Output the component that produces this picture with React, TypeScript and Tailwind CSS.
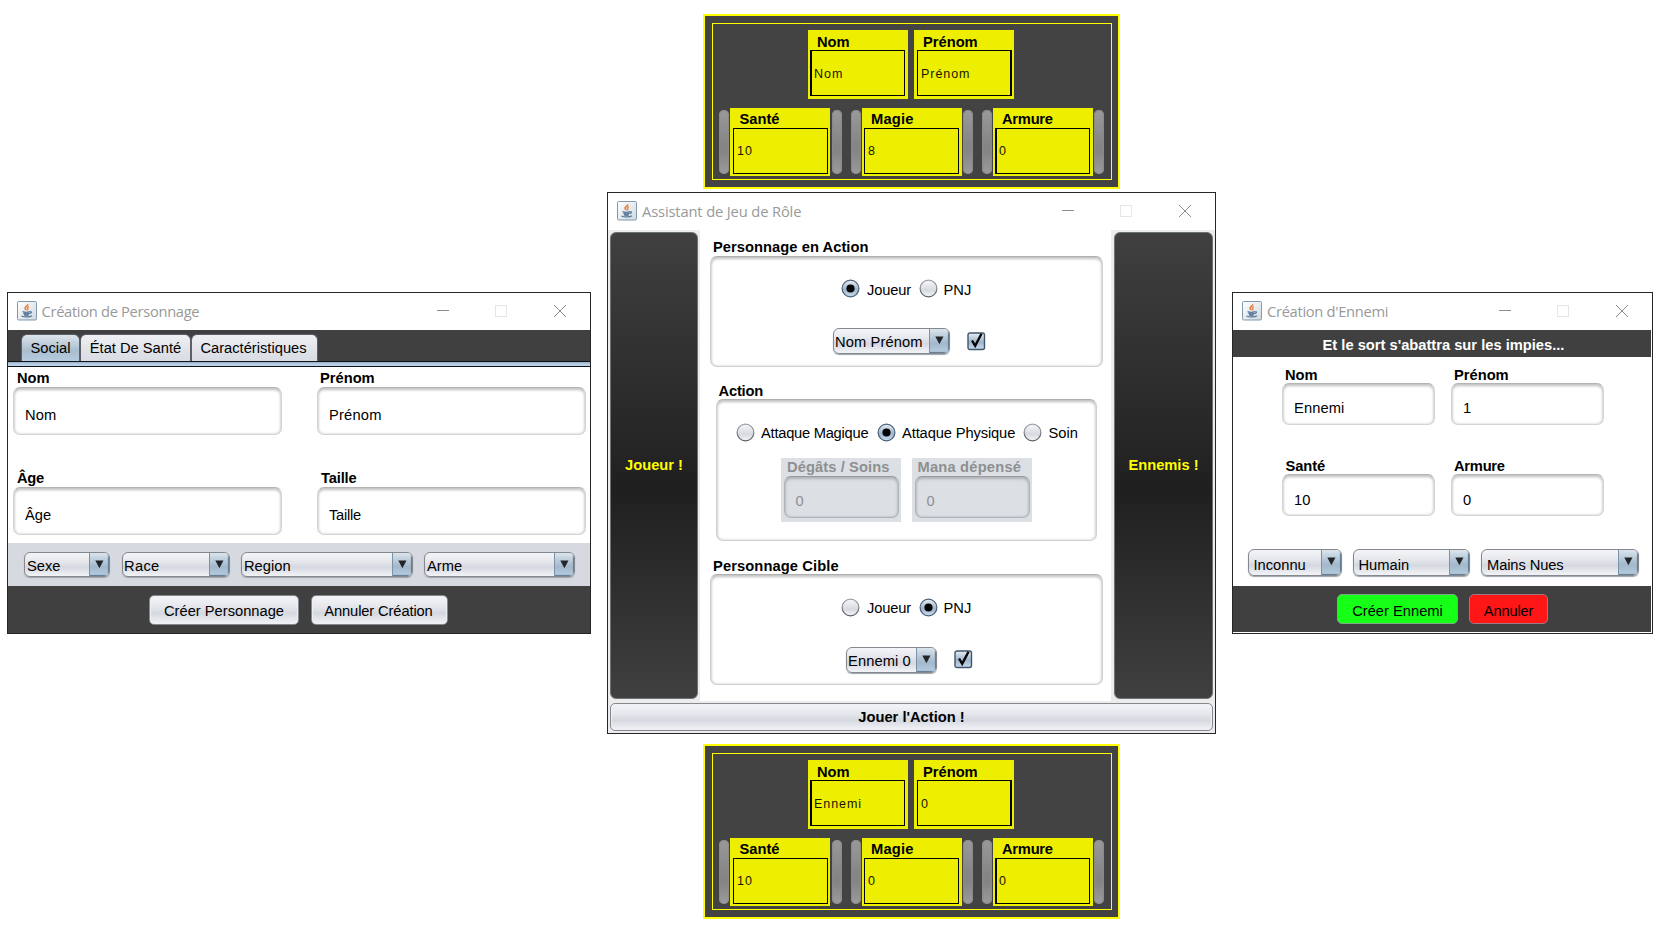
import React from "react";
import clsx from "clsx";

const SILVER = "bg-[linear-gradient(to_bottom,#f4f5f8_0%,#e4e6eb_40%,#d5d8e0_62%,#e9ebf0_88%,#f2f3f6_100%)]";
const BLUE = "bg-[linear-gradient(to_bottom,#dbe4ec_0%,#b4c6d6_40%,#a2b8cb_60%,#b6cce0_100%)]";
const DARK = "bg-[linear-gradient(to_bottom,#404040_0%,#262626_45%,#1f1f1f_55%,#404040_100%)]";

function JavaIcon() {
  return (
    <svg width="20" height="20" viewBox="0 0 20 20" fill="none">
      <defs>
        <linearGradient id="cup-bg" x1="0" y1="0" x2="1" y2="1">
          <stop offset="0" stopColor="#ffffff" />
          <stop offset="1" stopColor="#cfd8e0" />
        </linearGradient>
      </defs>
      <rect x="0.5" y="0.5" width="19" height="18.5" rx="1.2" fill="url(#cup-bg)" stroke="#8299ae" />
      <path d="M10.600 3.300c.6 1.500-2.600 2.400-2.600 4 0 .9 1.200 1.300 1.200 2" stroke="#e57f3c" strokeWidth="1.600" />
      <path d="M11.800 5.600c-1.500.7-1.800 1.500-.9 2.200.5.500 0 1-.6 1.400" stroke="#e57f3c" strokeWidth="1.200" />
      <path d="M5.600 10.700c1.800.7 5.400.7 7.400 0M6.400 12.400c1.700.6 4.300.6 6 0M13.200 10.500c1.700 0 1.600 1.700-.5 2.200M7 13.900c1.300.5 3.500.5 4.900 0M4.400 15c2.700 1.400 8.800 1.300 10.600-.2" stroke="#56779a" strokeWidth="1.250" />
    </svg>
  );
}

function TitleBar({ title, track }: { title: string; track: string }) {
  return (
    <div className="flex h-[37px] shrink-0 bg-white pl-[9px] pr-[24px]">
      <div className="pt-[8px]">
        <JavaIcon />
      </div>
      <div className={clsx("mt-[8px] whitespace-nowrap font-['Open_Sans',sans-serif] text-[14.7px] leading-5 text-[#999]", track)}>{title}</div>
      <svg className="ml-auto mt-[11px]" width="129" height="14" viewBox="0 0 129 14" fill="none" shapeRendering="crispEdges">
        <path d="M0 6.500h12" stroke="#8c8c8c" />
        <rect x="58.500" y="1.500" width="11" height="11" stroke="#e6e6e6" />
        <path d="M117 1l12 12M129 1l-12 12" stroke="#8c8c8c" shapeRendering="auto" />
      </svg>
    </div>
  );
}

type FieldProps = { label: string; value: string; size: string; labelClass: string; valueClass: string };

function Field({ label, value, size, labelClass, valueClass }: FieldProps) {
  return (
    <div>
      <div className={clsx("h-[17px] whitespace-nowrap font-bold leading-4", labelClass)}>{label}</div>
      <div
        className={clsx(
          "whitespace-nowrap rounded-[7px] border border-[#d4d4d4] border-t-[#b4b4b4] leading-4 shadow-[inset_0_2px_3px_#c2c2c2,inset_0_0_3px_#cfcfcf]",
          size,
          valueClass,
        )}
      >
        {value}
      </div>
    </div>
  );
}

function Combo({ text, size, cap, textClass }: { text: string; size: string; cap: string; textClass: string }) {
  return (
    <div className={clsx("flex shrink-0 overflow-hidden rounded-[6px] border border-[#85898f] shadow-[0_1px_1px_#9da2aa]", SILVER, size)}>
      <div className={clsx("flex-1 whitespace-nowrap leading-4", textClass)}>{text}</div>
      <div className={clsx("flex justify-center border-l border-[#7b93a8] shadow-[inset_-1px_-1px_1px_#5d7890]", BLUE, cap)}>
        <svg className="mt-[7px]" width="9" height="9" viewBox="0 0 9 9">
          <path d="M0.300 0.500h8.200L4.400 8.300z" fill="#22262a" />
        </svg>
      </div>
    </div>
  );
}

function Radio({ on }: { on?: boolean }) {
  return (
    <svg className="block shrink-0" width="19" height="19" viewBox="0 0 19 19">
      <defs>
        <linearGradient id="radio-off" x1="0" y1="0" x2="0" y2="1">
          <stop offset="0" stopColor="#f8f8fa" />
          <stop offset="0.600" stopColor="#d6d9df" />
          <stop offset="1" stopColor="#f4f5f8" />
        </linearGradient>
        <linearGradient id="radio-on" x1="0" y1="0" x2="0" y2="1">
          <stop offset="0" stopColor="#e8eef4" />
          <stop offset="0.550" stopColor="#9fb5c9" />
          <stop offset="1" stopColor="#c8dcf0" />
        </linearGradient>
        <linearGradient id="radio-edge" x1="0" y1="0" x2="0" y2="1">
          <stop offset="0" stopColor="#9ea2a8" />
          <stop offset="1" stopColor="#5d6166" />
        </linearGradient>
      </defs>
      <circle cx="9.500" cy="9.500" r="8.400" fill={on ? "url(#radio-on)" : "url(#radio-off)"} stroke={on ? "#4b6178" : "url(#radio-edge)"} strokeWidth="1.200" />
      {on && <circle cx="9.500" cy="9.500" r="4.100" fill="#050505" />}
    </svg>
  );
}

function Check() {
  return (
    <svg className="block shrink-0" width="19" height="19" viewBox="0 0 19 19">
      <rect x="1" y="1" width="16.500" height="16.500" rx="2" fill="url(#radio-on)" stroke="#3f566c" strokeWidth="1.400" />
      <path d="M5 8.500l3.200 5.300L14.500 1.800" fill="none" stroke="#050505" strokeWidth="2.400" />
    </svg>
  );
}

function RadioItem({ label, on, gap, track, drop = "mt-[3px]" }: { label: string; on?: boolean; gap: string; track?: string; drop?: string }) {
  return (
    <div className={clsx("flex shrink-0", gap)}>
      <Radio on={on} />
      <span className={clsx("whitespace-nowrap leading-4", drop, track)}>{label}</span>
    </div>
  );
}

function SilverButton({ text, size, textClass }: { text: string; size: string; textClass: string }) {
  return (
    <button className={clsx("whitespace-nowrap rounded-[5px] border border-[#85898f] leading-4 shadow-[inset_0_0_1px_1px_#eef0f4]", SILVER, size, textClass)}>
      {text}
    </button>
  );
}

function StatBox({ label, value, labelClass, boxClass, outer }: { label: string; value: string; labelClass: string; boxClass: string; outer: string }) {
  return (
    <div className={clsx("w-[100px] shrink-0 bg-[#eeee00]", outer)}>
      <div className={clsx("h-4 whitespace-nowrap font-bold leading-4", labelClass)}>{label}</div>
      <div className={clsx("h-[46px] w-[95px] border border-black text-[12.500px] leading-4 tracking-[0.950px] text-[#181800]", boxClass)}>{value}</div>
    </div>
  );
}

function Bar({ gap }: { gap?: string }) {
  return (
    <div
      className={clsx(
        "mt-[2px] h-[64px] w-[10px] shrink-0 rounded-[5px] bg-[linear-gradient(to_bottom,#9a9a9a_0%,#868686_50%,#848484_65%,#9c9c9c_100%)] shadow-[inset_0_0_1px_1px_#8a8a8a]",
        gap,
      )}
    />
  );
}

type Stats = { nom: string; prenom: string; sante: string; magie: string; armure: string };

function StatCard({ s, place }: { s: Stats; place: string }) {
  return (
    <section className={clsx("absolute h-[175px] w-[417px] border-2 border-[#ffff00] bg-[#434343] p-[7px]", place)}>
      <div className="h-[157px] w-[400px] border border-[#ffff00] pt-[6px]">
        <div className="flex gap-[6px] pl-[95px]">
          <StatBox outer="h-[69px] pt-[4px]" label="Nom" value={s.nom} labelClass="pl-[9px]" boxClass="ml-[2px] border-l-2 pl-[2px] pt-[15px]" />
          <StatBox outer="h-[69px] pt-[4px]" label="Prénom" value={s.prenom} labelClass="pl-[9px]" boxClass="ml-[3px] border-r-2 pl-[3px] pt-[15px]" />
        </div>
        <div className="mt-[9px] flex pl-[6px]">
          <Bar />
          <StatBox outer="ml-px h-[68px] pt-[4px]" label="Santé" value={s.sante} labelClass="-mt-px mb-px pl-[9.500px]" boxClass="ml-[3px] pl-[3px] pt-[14px]" />
          <Bar gap="ml-[2px]" />
          <Bar gap="ml-[9px]" />
          <StatBox outer="ml-px h-[68px] pt-[4px]" label="Magie" value={s.magie} labelClass="-mt-px mb-px pl-[9px] tracking-[0.200px]" boxClass="ml-[2px] pl-[3px] pt-[14px]" />
          <Bar gap="ml-px" />
          <Bar gap="ml-[9px]" />
          <StatBox outer="ml-px h-[68px] pt-[4px]" label="Armure" value={s.armure} labelClass="-mt-px mb-px pl-[9px] tracking-[-0.250px]" boxClass="ml-[2px] border-l-2 pl-[2px] pt-[14px]" />
          <Bar gap="ml-px" />
        </div>
      </div>
    </section>
  );
}

function CharacterWindow() {
  const big = "h-[48px] w-[269px] pl-[11px] pt-[19px]";
  const tab = "h-[27px] shrink-0 rounded-t-[6px] border border-b-0 border-[#5b6068] pt-[5px] text-center leading-4 whitespace-nowrap";
  return (
    <section className="absolute left-[7px] top-[292px] flex h-[342px] w-[584px] flex-col border border-[#262626] bg-white">
      <TitleBar title="Création de Personnage" track="ml-[4.500px] tracking-[-0.310px]" />
      <div className="flex h-[31px] items-end bg-[#404040] pl-[13px]">
        <div className={clsx(tab, "w-[59px] bg-[linear-gradient(to_bottom,#dde5ec_0%,#a9bdce_60%,#b5cbdf_100%)]")}>Social</div>
        <div className={clsx(tab, "w-[111px] bg-[linear-gradient(to_bottom,#eff0f3_0%,#e0e2e8_60%,#d9dce3_100%)]")}>État De Santé</div>
        <div className={clsx(tab, "w-[127px] bg-[linear-gradient(to_bottom,#eff0f3_0%,#e0e2e8_60%,#d9dce3_100%)] pr-[2px]")}>Caractéristiques</div>
      </div>
      <div className="h-[6px] shrink-0 border-y border-[#10151c] bg-[linear-gradient(to_bottom,#94a9c0,#b9d0e6_50%)]" />
      <div className="grid h-[176px] shrink-0 grid-cols-[304px_1fr] grid-rows-[100px_1fr] pl-[5px] pt-[3px]">
        <Field label="Nom" value="Nom" size={big} labelClass="pl-[4px]" valueClass="tracking-[0.100px]" />
        <Field label="Prénom" value="Prénom" size={big} labelClass="pl-[3px]" valueClass="tracking-[0.200px]" />
        <Field label="Âge" value="Âge" size={big} labelClass="pl-[4px] tracking-[-0.300px]" valueClass="" />
        <Field label="Taille" value="Taille" size={big} labelClass="pl-[4px] tracking-[-0.150px]" valueClass="tracking-[-0.280px]" />
      </div>
      <div className="flex h-[43px] shrink-0 bg-[#d6d9e0] pl-[16px] pt-[9px]">
        <Combo text="Sexe" size="h-[25px] w-[86px]" cap="w-[20px]" textClass="pl-[2px] pt-[5px]" />
        <Combo text="Race" size="ml-[12px] h-[25px] w-[108px]" cap="w-[20px]" textClass="pl-[1px] pt-[5px] tracking-[0.300px]" />
        <Combo text="Region" size="ml-[11px] h-[25px] w-[172px]" cap="w-[20px]" textClass="pl-[2px] pt-[5px]" />
        <Combo text="Arme" size="ml-[11px] h-[25px] w-[151px]" cap="w-[20px]" textClass="pl-[2px] pt-[5px]" />
      </div>
      <div className="flex flex-1 bg-[#404040] pl-[141px] pt-[9px]">
        <SilverButton text="Créer Personnage" size="h-[30px] w-[150px]" textClass="pt-[2px]" />
        <SilverButton text="Annuler Création" size="ml-[12px] h-[30px] w-[137px]" textClass="pr-[2px] pt-[2px] tracking-[-0.120px]" />
      </div>
    </section>
  );
}

function EnemyWindow() {
  const box = "w-[153px] pl-[11px]";
  return (
    <section className="absolute left-[1232px] top-[292px] flex h-[342px] w-[421px] flex-col border border-[#262626] bg-white">
      <TitleBar title="Création d'Ennemi" track="ml-[5px] tracking-[-0.300px]" />
      <div className="mr-px h-[27px] shrink-0 bg-[#404040] pl-[3px] pt-[7px] text-center font-bold leading-4 text-white">Et le sort s'abattra sur les impies...</div>
      <div className="grid h-[183px] shrink-0 grid-cols-[169px_1fr] grid-rows-[91px_1fr] pl-[49px] pt-[9px]">
        <Field label="Nom" value="Ennemi" size={box} labelClass="pl-[3px] pt-px" valueClass="h-[42px] pt-[16px] tracking-[0.100px]" />
        <Field label="Prénom" value="1" size={box} labelClass="pl-[3px] pt-px" valueClass="h-[42px] pt-[16px]" />
        <Field label="Santé" value="10" size={box} labelClass="pl-[3.500px] pt-px tracking-[-0.100px]" valueClass="h-[42px] pt-[17px]" />
        <Field label="Armure" value="0" size={box} labelClass="pl-[3px] pt-px tracking-[-0.250px]" valueClass="h-[42px] pt-[17px]" />
      </div>
      <div className="flex h-[46px] shrink-0 pl-[15px] pt-[9px]">
        <Combo text="Inconnu" size="h-[27px] w-[94px]" cap="w-[20px]" textClass="pl-[4.500px] pt-[7px]" />
        <Combo text="Humain" size="ml-[11px] h-[27px] w-[117px]" cap="w-[20px]" textClass="pl-[4.500px] pt-[7px]" />
        <Combo text="Mains Nues" size="ml-[11px] h-[27px] w-[158px]" cap="w-[20px]" textClass="pl-[5px] pt-[7px] tracking-[-0.100px]" />
      </div>
      <div className="mb-px mr-px flex flex-1 bg-[#404040] pl-[104px] pt-[8px]">
        <button className="h-[30px] w-[121px] rounded-[5px] border border-[#7fa88a] bg-[#16ff16] pt-[3px] leading-4">Créer Ennemi</button>
        <button className="ml-[11px] h-[30px] w-[79px] rounded-[5px] border border-[#a07880] bg-[#ff1616] pt-[3px] leading-4 tracking-[-0.170px]">Annuler</button>
      </div>
    </section>
  );
}

function Panel({ title, size, titleClass, children }: { title: string; size: string; titleClass: string; children: React.ReactNode }) {
  return (
    <div>
      <div className={clsx("h-[17px] whitespace-nowrap font-bold leading-4", titleClass)}>{title}</div>
      <div
        className={clsx(
          "rounded-[7px] border border-[#d0d0d0] border-t-[#aeb0ae] shadow-[inset_0_2px_3px_#c2c2c2,inset_0_0_3px_#cfcfcf]",
          size,
        )}
      >
        {children}
      </div>
    </div>
  );
}

function DisabledField({ label, value, labelClass }: { label: string; value: string; labelClass: string }) {
  return (
    <div className="h-[64px] w-[120px] bg-[#dce0e5] pl-[3px] pt-px text-[#8e8f91]">
      <div className={clsx("h-[17px] whitespace-nowrap font-bold leading-4", labelClass)}>{label}</div>
      <div className="h-[42px] w-[115px] rounded-[7px] border border-[#b0b3b7] border-t-[#989b9e] pl-[11px] pt-[16px] leading-4 shadow-[inset_0_2px_3px_#b0b3b7,inset_0_0_3px_#b6b9bd]">
        {value}
      </div>
    </div>
  );
}

function MainWindow() {
  const side = "rounded-[6px] border border-[#6c7377] pb-[2px] font-bold leading-4 text-[#ffff00]";
  return (
    <section className="absolute left-[607px] top-[192px] flex h-[542px] w-[609px] flex-col border border-[#262626] bg-[#ececec]">
      <TitleBar title="Assistant de Jeu de Rôle" track="ml-[5px] tracking-[-0.130px]" />
      <div className="flex h-[471px] shrink-0">
        <div className="w-[92px] pl-[2px] pt-[2px]">
          <button className={clsx(side, DARK, "h-[467px] w-[88px]")}>Joueur !</button>
        </div>
        <div className="w-[411px] bg-white pl-[10px] pt-[9px]">
          <Panel title="Personnage en Action" titleClass="pl-[3px] tracking-[0.050px]" size="h-[111px] w-[393px] pl-[130px] pt-[22px]">
            <div className="flex">
              <RadioItem label="Joueur" on gap="w-[78px] gap-[7px]" track="tracking-[-0.170px]" />
              <RadioItem label="PNJ" gap="gap-[5.500px]" />
            </div>
            <div className="-ml-[8.500px] mt-[30px] flex">
              <Combo text="Nom Prénom" size="h-[26px] w-[117px]" cap="w-[20px]" textClass="pl-[1.500px] pt-[5px] tracking-[0.100px]" />
              <div className="ml-[17px] mt-[4px]">
                <Check />
              </div>
            </div>
          </Panel>
          <div className="ml-[6px] mt-[15px]">
            <Panel title="Action" titleClass="pl-[2.500px] pt-px tracking-[-0.200px]" size="h-[142px] w-[381px] pt-[23px]">
              <div className="flex pl-[18.500px]">
                <RadioItem label="Attaque Magique" drop="mt-[2px]" gap="w-[141.500px] gap-[6.500px]" track="tracking-[-0.250px]" />
                <RadioItem label="Attaque Physique" drop="mt-[2px]" on gap="w-[146px] gap-[6px]" track="tracking-[-0.120px]" />
                <RadioItem label="Soin" drop="mt-[2px]" gap="gap-[6.500px]" />
              </div>
              <div className="mt-[16px] flex gap-[11px] pl-[63.500px]">
                <DisabledField label="Dégâts / Soins" value="0" labelClass="pl-[3.500px] tracking-[0.100px]" />
                <DisabledField label="Mana dépensé" value="0" labelClass="pl-[3px] tracking-[0.200px]" />
              </div>
            </Panel>
          </div>
          <div className="mt-[16px]">
            <Panel title="Personnage Cible" titleClass="pl-[3px] pt-px tracking-[0.100px]" size="h-[111px] w-[393px] pl-[130px] pt-[23px]">
              <div className="flex">
                <RadioItem label="Joueur" drop="mt-[2px]" gap="w-[78px] gap-[7px]" track="tracking-[-0.170px]" />
                <RadioItem label="PNJ" drop="mt-[2px]" on gap="gap-[5.500px]" />
              </div>
              <div className="ml-[4.500px] mt-[30px] flex">
                <Combo text="Ennemi 0" size="h-[26px] w-[91px]" cap="w-[20px]" textClass="pl-[1.500px] pt-[5px] tracking-[0.100px]" />
                <div className="ml-[17.500px] mt-[3px]">
                  <Check />
                </div>
              </div>
            </Panel>
          </div>
        </div>
        <div className="flex-1 pl-[3px] pt-[2px]">
          <button className={clsx(side, DARK, "h-[467px] w-[99px]")}>Ennemis !</button>
        </div>
      </div>
      <div className="pl-[2px] pt-[2px]">
        <SilverButton text="Jouer l'Action !" size="h-[28px] w-[603px]" textClass="font-bold" />
      </div>
    </section>
  );
}

export default function App() {
  return (
    <main className="relative h-[933px] w-[1656px] overflow-hidden bg-white font-['Liberation_Sans',Arial,sans-serif] text-[14.700px] text-black">
      <StatCard place="left-[703px] top-[14px]" s={{ nom: "Nom", prenom: "Prénom", sante: "10", magie: "8", armure: "0" }} />
      <CharacterWindow />
      <MainWindow />
      <EnemyWindow />
      <StatCard place="left-[703px] top-[744px]" s={{ nom: "Ennemi", prenom: "0", sante: "10", magie: "0", armure: "0" }} />
    </main>
  );
}
